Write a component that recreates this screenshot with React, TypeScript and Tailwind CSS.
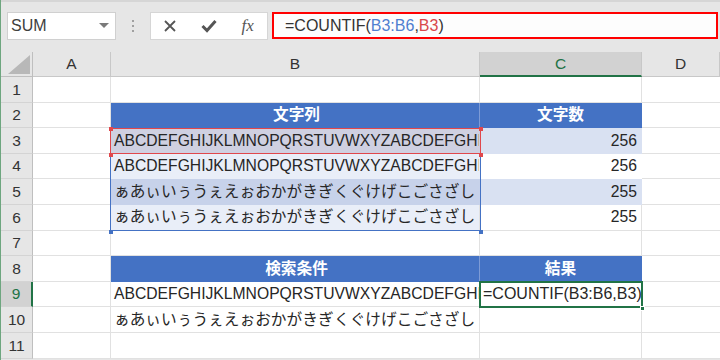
import React from "react";

const GRID = "border-[#e1e1e1]";
const ROW_H = "h-[25.6px]";
const CELL_FONT = "font-['Liberation_Sans','Noto_Sans_CJK_JP',sans-serif] text-[15.7px] text-[#262626]";

const LATIN = "ABCDEFGHIJKLMNOPQRSTUVWXYZABCDEFGHIJKLMNOPQRSTUVWXYZ";
const KANA = "ぁあぃいぅうぇえぉおかがきぎくぐけげこごさざし";

type RowProps = {
  n: number;
  active?: boolean;
  b?: React.ReactNode;
  c?: React.ReactNode;
  bClass?: string;
  cClass?: string;
};

function SheetRow({ n, active, b, c, bClass = "", cClass = "" }: RowProps) {
  return (
    <div className={`flex ${ROW_H}`}>
      <div
        className={`w-[32px] shrink-0 flex items-center justify-center border-b border-[#d4d4d4] text-[15.5px] font-['Liberation_Sans',sans-serif] ${
          active
            ? "bg-[#d2d2d2] text-[#217346] border-r-2 border-r-[#217346]"
            : "bg-[#e6e6e6] text-[#333] border-r border-r-[#bfbfbf]"
        }`}
      >
        {n}
      </div>
      <div className={`w-[78px] shrink-0 border-r border-b ${GRID} bg-white`} />
      <div
        className={`w-[369px] shrink-0 border-r border-b overflow-hidden whitespace-nowrap flex items-center pl-[3px] ${CELL_FONT} ${
          bClass || `${GRID} bg-white`
        }`}
      >
        {b}
      </div>
      <div
        className={`w-[162px] shrink-0 border-r border-b whitespace-nowrap flex items-center px-[4px] ${CELL_FONT} ${
          cClass || `${GRID} bg-white`
        }`}
      >
        {c}
      </div>
      <div className={`flex-1 border-b ${GRID} bg-white`} />
    </div>
  );
}

function HeadCell({ children, w, active }: { children?: React.ReactNode; w: string; active?: boolean }) {
  return (
    <div
      className={`${w} shrink-0 flex items-center justify-center border-r border-[#c8c8c8] text-[15.5px] ${
        active
          ? "bg-[#d2d2d2] text-[#217346] border-b-2 border-b-[#217346]"
          : "bg-[#e6e6e6] text-[#333] border-b border-b-[#c8c8c8]"
      }`}
    >
      {children}
    </div>
  );
}

function Formula() {
  return (
    <>
      =COUNTIF(<span className="text-[#4f7fd0]">B3:B6</span>,
      <span className="text-[#d9474b]">B3</span>)
    </>
  );
}

export default function App() {
  return (
    <div className="w-[720px] h-[360px] overflow-hidden bg-[#e6e6e6] border-l border-l-[#6ea67f] font-['Liberation_Sans',sans-serif]">
      {/* formula toolbar */}
      <div className="h-[52px] border-t-[2px] border-t-[#d6d6d6] flex items-start pt-[10px]">
        <div className="ml-[6px] w-[109px] h-[28px] bg-white border border-[#d0d0d0] flex items-center justify-between pl-[3px] pr-[6px] text-[16px] text-[#404040]">
          <span>SUM</span>
          <svg width="10" height="6" viewBox="0 0 10 6">
            <path d="M0 0 L10 0 L5 5 Z" fill="#7a7a7a" />
          </svg>
        </div>
        <div className="w-[34px] h-[28px] flex flex-col items-center justify-center gap-[3px]">
          <span className="w-[2px] h-[2px] bg-[#a0a0a0]" />
          <span className="w-[2px] h-[2px] bg-[#a0a0a0]" />
          <span className="w-[2px] h-[2px] bg-[#a0a0a0]" />
        </div>
        <div className="w-[118px] h-[28px] bg-white border border-[#d6d6d6] flex">
          <div className="w-[39px] flex items-center justify-center">
            <svg width="14" height="14" viewBox="0 0 14 14">
              <path d="M2 2 L12 12 M12 2 L2 12" stroke="#555" strokeWidth="1.8" />
            </svg>
          </div>
          <div className="w-[39px] flex items-center justify-center">
            <svg width="16" height="14" viewBox="0 0 16 14">
              <path d="M1.5 7 L6 11.5 L14.5 2" stroke="#555" strokeWidth="3" fill="none" />
            </svg>
          </div>
          <div className="w-[39px] flex items-center justify-center font-['Liberation_Serif',serif] italic text-[17px] text-[#555]">
            fx
          </div>
        </div>
        <div className="ml-[4px] mr-[2px] flex-1 h-[27px] bg-[#fdfdfd] border-2 border-[#ff0000] flex items-center pl-[11px] text-[16px] text-[#333]">
          <Formula />
        </div>
      </div>

      {/* column headers */}
      <div className="flex h-[25px]">
        <div className="w-[32px] shrink-0 bg-[#e6e6e6] border-r border-b border-[#bfbfbf] flex items-end justify-end p-[2px]">
          <svg width="22" height="19" viewBox="0 0 22 19">
            <path d="M22 0 L22 19 L0 19 Z" fill="#b8b8b8" />
          </svg>
        </div>
        <HeadCell w="w-[78px]">A</HeadCell>
        <HeadCell w="w-[369px]">B</HeadCell>
        <HeadCell w="w-[162px]" active>
          C
        </HeadCell>
        <HeadCell w="flex-1">D</HeadCell>
      </div>

      {/* sheet body */}
      <div className="relative">
        <SheetRow n={1} />
        <SheetRow
          n={2}
          b={<span className="w-full text-center font-bold text-white">文字列</span>}
          c={<span className="w-full text-center font-bold text-white">文字数</span>}
          bClass="bg-[#4472c4] border-b-[#4472c4] border-r-[#7d9bd6]"
          cClass="bg-[#4472c4] border-[#4472c4]"
        />
        <SheetRow
          n={3}
          b={LATIN}
          c={<span className="w-full text-right">256</span>}
          bClass="bg-[#cfd0e1] border-[#cfd0e1]"
          cClass="bg-[#d9e1f2] border-[#d9e1f2]"
        />
        <SheetRow
          n={4}
          b={LATIN}
          c={<span className="w-full text-right">256</span>}
          bClass="bg-[#e9eef8] border-[#e9eef8]"
          cClass="bg-white border-white"
        />
        <SheetRow
          n={5}
          b={KANA}
          c={<span className="w-full text-right">255</span>}
          bClass="bg-[#c7d2ea] border-[#c7d2ea]"
          cClass="bg-[#d9e1f2] border-[#d9e1f2]"
        />
        <SheetRow
          n={6}
          b={KANA}
          c={<span className="w-full text-right">255</span>}
          bClass="bg-[#e9eef8] border-[#e1e1e1]"
          cClass={`bg-white ${GRID}`}
        />
        <SheetRow n={7} />
        <SheetRow
          n={8}
          b={<span className="w-full text-center font-bold text-white">検索条件</span>}
          c={<span className="w-full text-center font-bold text-white">結果</span>}
          bClass="bg-[#4472c4] border-b-[#4472c4] border-r-[#7d9bd6]"
          cClass="bg-[#4472c4] border-[#4472c4]"
        />
        <SheetRow
          n={9}
          active
          b={LATIN}
          c={<span className="-ml-[1px] text-[16px]">=COUNTIF(B3:B6,B3)</span>}
        />
        <SheetRow n={10} b={KANA} />
        <SheetRow n={11} />

        {/* selection overlays */}
        <div className="absolute left-[109px] top-[50.7px] w-[371px] h-[103.6px] border-[1.5px] border-[#4472c4]" />
        <div className="absolute left-[108px] top-[152.5px] w-[4px] h-[4px] bg-[#4472c4]" />
        <div className="absolute left-[477.5px] top-[152.5px] w-[4px] h-[4px] bg-[#4472c4]" />
        <div className="absolute left-[109px] top-[50.7px] w-[371px] h-[26.6px] border-[1.5px] border-[#e0474c]" />
        <div className="absolute left-[108px] top-[49.5px] w-[4px] h-[4px] bg-[#e0474c]" />
        <div className="absolute left-[477.5px] top-[49.5px] w-[4px] h-[4px] bg-[#e0474c]" />
        <div className="absolute left-[108px] top-[75.5px] w-[4px] h-[4px] bg-[#e0474c]" />
        <div className="absolute left-[477.5px] top-[75.5px] w-[4px] h-[4px] bg-[#e0474c]" />
        <div className="absolute left-[478px] top-[204px] w-[164px] h-[27.2px] border-2 border-[#217346]" />
        <div className="absolute left-[638.5px] top-[228.5px] w-[5px] h-[5px] bg-[#217346] border border-white" />
      </div>
    </div>
  );
}
